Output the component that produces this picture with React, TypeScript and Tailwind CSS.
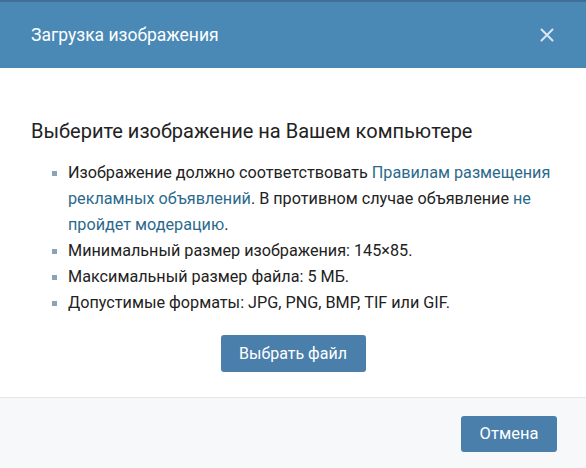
export default function App() {
  return (
    <div className="h-[468px] w-[586px] overflow-hidden bg-white font-['Roboto',sans-serif]">
      {/* header */}
      <div className="flex h-[68px] items-center justify-between border-t-2 border-[#3f6f96] bg-[#4a89b6] pl-[31px] pr-[32px]">
        <div className="text-[17.5px] text-white">Загрузка изображения</div>
        <svg width="14" height="14" viewBox="0 0 14 14" className="text-[#d9e6f0]">
          <path d="M1.5 1.5l11 11M12.5 1.5l-11 11" stroke="currentColor" strokeWidth="2" strokeLinecap="round" />
        </svg>
      </div>

      {/* body */}
      <div className="h-[329px] px-[31px] pt-[51px]">
        <h2 className="text-[20px] leading-6 text-[#222]">Выберите изображение на Вашем компьютере</h2>
        <ul className="mt-[17px] pl-[21px] text-[16.2px] leading-[26px] text-[#222]">
          <Item>
            Изображение должно соответствовать <a className="text-[#2b6a8c]">Правилам размещения рекламных объявлений</a>. В противном случае объявление <a className="text-[#2b6a8c]">не пройдет модерацию</a>.
          </Item>
          <Item>Минимальный размер изображения: 145×85.</Item>
          <Item>Максимальный размер файла: 5 МБ.</Item>
          <Item>Допустимые форматы: JPG, PNG, BMP, TIF или GIF.</Item>
        </ul>
        <div className="mt-[19px] flex justify-center">
          <button className="h-[37px] w-[145px] rounded-[3px] bg-[#4a7fab] text-[16px] text-white">Выбрать файл</button>
        </div>
      </div>

      {/* footer */}
      <div className="flex h-[71px] justify-end border-t border-[#e4e6e9] bg-[#f7f8fa] pr-[29px] pt-[18px]">
        <button className="h-[36px] w-[96px] rounded-[3px] bg-[#4a7fab] text-[16.5px] text-white">Отмена</button>
      </div>
    </div>
  );
}

function Item({ children }: { children: React.ReactNode }) {
  return (
    <li className="relative pl-[16px]">
      <span className="absolute left-0 top-[11px] h-[5px] w-[5px] bg-[#8aa3b8]" />
      {children}
    </li>
  );
}
